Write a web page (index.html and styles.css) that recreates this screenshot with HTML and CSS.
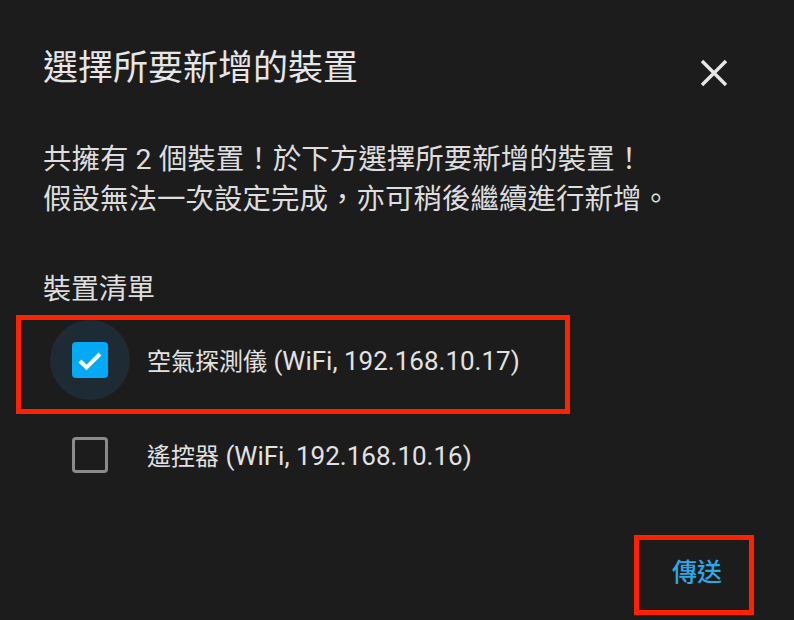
FILE: index.html
```html
<html>
<head>
    <link rel="stylesheet" href="styles.css">
</head>
<body>
    <div class="dialog">
        <div class="header">
            <h2 class="title">選擇所要新增的裝置</h2>
            <button class="close" aria-label="close">
                <svg width="28" height="28" viewBox="0 0 28 28">
                    <path d="M2 2 L26 26 M26 2 L2 26" stroke="#e6e6e6" stroke-width="3.4" fill="none"/>
                </svg>
            </button>
        </div>
        <p class="message">共擁有 2 個裝置！於下方選擇所要新增的裝置！<br>假設無法一次設定完成，亦可稍後繼續進行新增。</p>
        <div class="label">裝置清單</div>
        <div class="list">
            <div class="row">
                <div class="check-wrap active">
                    <span class="box checked">
                        <svg width="36" height="36" viewBox="0 0 36 36">
                            <path d="M8 19 L14.5 25.5 L28 12" stroke="#ffffff" stroke-width="4" fill="none"/>
                        </svg>
                    </span>
                </div>
                <span class="name">空氣探測儀<span class="addr"> (WiFi, 192.168.10.17)</span></span>
                <div class="mark mark-row"></div>
            </div>
            <div class="row">
                <div class="check-wrap">
                    <span class="box"></span>
                </div>
                <span class="name">遙控器<span class="addr"> (WiFi, 192.168.10.16)</span></span>
            </div>
        </div>
        <div class="footer">
            <button class="send">傳送<span class="mark mark-btn"></span></button>
        </div>
    </div>
</body>
</html>
```

FILE: styles.css
```css
body {
    margin: 0;
    background-color: #1c1c1c;
    color: #e2e2e2;
    font-family: Roboto, "Noto Sans CJK TC", sans-serif;
}
.dialog {
    width: 794px;
    height: 620px;
    box-sizing: border-box;
    padding: 45px 40px 0 43px;
    overflow: hidden;
}
.header {
    display: flex;
    align-items: center;
    justify-content: space-between;
    height: 48px;
}
.title {
    margin: 0;
    font-size: 35px;
    font-weight: 400;
    line-height: 48px;
    color: #e6e6e6;
}
.close {
    width: 48px;
    height: 48px;
    margin: 8px 16px 0 0;
    padding: 0;
    border: none;
    background: none;
    display: flex;
    align-items: center;
    justify-content: center;
}
.message {
    margin: 47px 0 0;
    font-size: 28.5px;
    line-height: 40px;
    color: #dedede;
}
.label {
    margin-top: 50px;
    font-size: 28px;
    line-height: 40px;
    color: #dedede;
}
.list {
    margin-top: 2px;
}
.row {
    position: relative;
    display: flex;
    align-items: center;
    height: 95px;
}
.check-wrap {
    width: 80px;
    height: 80px;
    margin-left: 7px;
    border-radius: 50%;
    display: flex;
    align-items: center;
    justify-content: center;
}
.check-wrap.active {
    background-color: #1f2b34;
}
.box {
    width: 36px;
    height: 36px;
    box-sizing: border-box;
    border: 3.5px solid #8a8a8a;
    border-radius: 4px;
}
.box.checked {
    border: none;
    background-color: #03a9f4;
}
.box svg {
    display: block;
}
.name {
    margin-left: 17px;
    font-size: 24px;
    color: #e2e2e2;
}
.addr {
    font-size: 26px;
}
.footer {
    display: flex;
    justify-content: flex-end;
    margin-top: 33px;
}
.send {
    position: relative;
    width: 120px;
    height: 80px;
    padding: 0 0 10px 6px;
    border: none;
    background: none;
    color: #29a9e6;
    font-family: Roboto, "Noto Sans CJK TC", sans-serif;
    font-size: 25px;
    font-weight: 500;
}
/* red annotation frames */
.mark {
    position: absolute;
    box-sizing: border-box;
    border: 5px solid #ff2200;
}
.mark-row {
    left: -27px;
    top: 3px;
    width: 554px;
    height: 99px;
}
.mark-btn {
    left: 0;
    top: 0;
    width: 120px;
    height: 80px;
}
```
